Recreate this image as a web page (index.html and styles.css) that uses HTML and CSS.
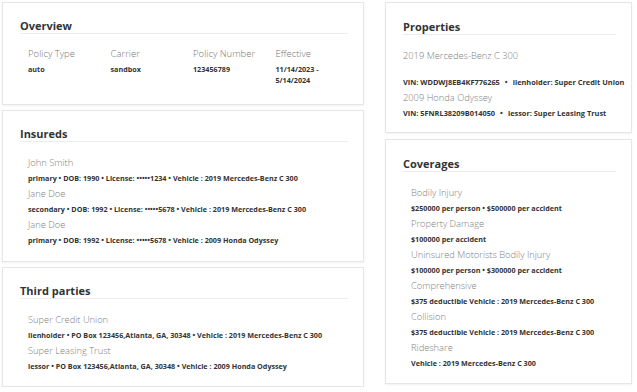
FILE: index.html
```html
<!DOCTYPE html>
<html>
<head>
<meta charset="utf-8">
<link rel="stylesheet" href="styles.css">
</head>
<body>
<div class="page">
  <div class="col col-left">
    <section class="card card-overview">
      <h2 class="card-title">Overview</h2>
      <div class="overview-grid">
        <div class="ov-item"><div class="label">Policy Type</div><div class="value">auto</div></div>
        <div class="ov-item"><div class="label">Carrier</div><div class="value">sandbox</div></div>
        <div class="ov-item"><div class="label">Policy Number</div><div class="value">123456789</div></div>
        <div class="ov-item"><div class="label">Effective</div><div class="value">11/14/2023 -<br>5/14/2024</div></div>
      </div>
    </section>
    <section class="card card-insureds">
      <h2 class="card-title">Insureds</h2>
      <div class="list indent">
        <div class="name">John Smith</div>
        <div class="value">primary • DOB: 1990 • License: •••••1234 • Vehicle : 2019 Mercedes-Benz C 300</div>
        <div class="name">Jane Doe</div>
        <div class="value">secondary • DOB: 1992 • License: •••••5678 • Vehicle : 2019 Mercedes-Benz C 300</div>
        <div class="name">Jane Doe</div>
        <div class="value">primary • DOB: 1992 • License: •••••5678 • Vehicle : 2009 Honda Odyssey</div>
      </div>
    </section>
    <section class="card card-third">
      <h2 class="card-title">Third parties</h2>
      <div class="list indent">
        <div class="name">Super Credit Union</div>
        <div class="value">lienholder • PO Box 123456,Atlanta, GA, 30348 • Vehicle : 2019 Mercedes-Benz C 300</div>
        <div class="name">Super Leasing Trust</div>
        <div class="value">lessor • PO Box 123456,Atlanta, GA, 30348 • Vehicle : 2009 Honda Odyssey</div>
      </div>
    </section>
  </div>
  <div class="col col-right">
    <section class="card card-properties">
      <h2 class="card-title">Properties</h2>
      <div class="list">
        <div class="name prop-first">2019 Mercedes-Benz C 300</div>
        <div class="value prop-value">VIN: WDDWJ8EB4KF776265<span class="sep">•</span>lienholder: Super Credit Union</div>
        <div class="name">2009 Honda Odyssey</div>
        <div class="value prop-value">VIN: 5FNRL38209B014050<span class="sep">•</span>lessor: Super Leasing Trust</div>
      </div>
    </section>
    <section class="card card-coverages">
      <h2 class="card-title">Coverages</h2>
      <div class="list indent">
        <div class="name">Bodily Injury</div>
        <div class="value">$250000 per person • $500000 per accident</div>
        <div class="name">Property Damage</div>
        <div class="value">$100000 per accident</div>
        <div class="name">Uninsured Motorists Bodily Injury</div>
        <div class="value">$100000 per person • $300000 per accident</div>
        <div class="name">Comprehensive</div>
        <div class="value">$375 deductible Vehicle : 2019 Mercedes-Benz C 300</div>
        <div class="name">Collision</div>
        <div class="value">$375 deductible Vehicle : 2019 Mercedes-Benz C 300</div>
        <div class="name">Rideshare</div>
        <div class="value">Vehicle : 2019 Mercedes-Benz C 300</div>
      </div>
    </section>
  </div>
</div>
</body>
</html>
```
FILE: styles.css
```css
* { box-sizing: border-box; }
html, body { margin: 0; padding: 0; background: #fff; }
body {
  font-family: "Open Sans", "Noto Sans", sans-serif;
  color: #333;
}
.page {
  display: grid;
  grid-template-columns: 362px 247px;
  column-gap: 21px;
  padding: 2px 0 0 2px;
  align-items: start;
}
.col { display: flex; flex-direction: column; }
.col-left { gap: 5px; }
.col-right { gap: 6px; }
.card {
  background: #fff;
  border: 1px solid #e6e6e6;
  box-shadow: 0 1px 2px rgba(0,0,0,0.06);
  padding: 15px 15px 12px 17px;
}
.col-right .card { padding-top: 16px; }
.card-title {
  margin: 0;
  font-size: 11px;
  font-weight: 700;
  line-height: 15px;
  color: #333;
  border-bottom: 1px solid #ececec;
}
.overview-grid {
  display: grid;
  grid-template-columns: repeat(4, 82.5px);
  padding-left: 8px;
  margin-top: 12px;
  padding-bottom: 6px;
}
.label {
  font-size: 9.5px;
  font-weight: 300;
  color: #777;
  line-height: 15px;
}
.name {
  font-size: 9.3px;
  font-weight: 300;
  color: #808080;
  line-height: 16px;
}
.value {
  font-size: 7.2px;
  font-weight: 700;
  color: #333;
  line-height: 15px;
  white-space: nowrap;
}
.prop-value { font-size: 7.4px; }
.sep { margin: 0 5px; }
.ov-item .value { line-height: 11px; margin-top: 3px; }
.list { margin-top: 13px; }
.list.indent { padding-left: 8px; }
.prop-first { margin-bottom: 11px; }
.card-insureds { padding-bottom: 13px; }
.card-properties { padding-bottom: 11px; }
```
